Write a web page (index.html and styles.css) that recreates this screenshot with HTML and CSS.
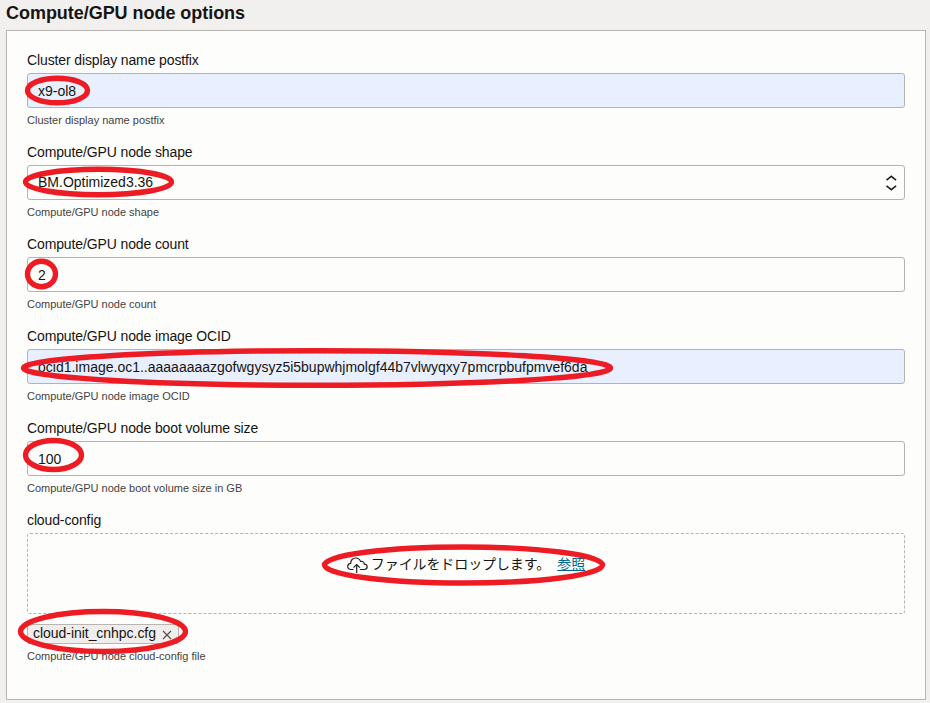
FILE: index.html
```html
<!DOCTYPE html>
<html lang="ja">
<head>
<meta charset="utf-8">
<title>Compute/GPU node options</title>
<link rel="stylesheet" href="styles.css">
</head>
<body>
<h2 class="title">Compute/GPU node options</h2>
<main class="panel">
  <div class="field">
    <div class="label">Cluster display name postfix</div>
    <div class="input filled"><span>x9-ol8</span></div>
    <div class="hint">Cluster display name postfix</div>
  </div>
  <div class="field">
    <div class="label">Compute/GPU node shape</div>
    <div class="input select"><span>BM.Optimized3.36</span>
      <svg class="chevrons" width="12" height="16" viewBox="0 0 12 16"><path d="M1.500 5.200 6.300 1.300l4.800 3.900M1.500 10.800 6.300 14.700l4.800-3.900"/></svg>
    </div>
    <div class="hint">Compute/GPU node shape</div>
  </div>
  <div class="field">
    <div class="label">Compute/GPU node count</div>
    <div class="input"><span>2</span></div>
    <div class="hint">Compute/GPU node count</div>
  </div>
  <div class="field">
    <div class="label">Compute/GPU node image OCID</div>
    <div class="input filled"><span>ocid1.image.oc1..aaaaaaaazgofwgysyz5i5bupwhjmolgf44b7vlwyqxy7pmcrpbufpmvef6da</span></div>
    <div class="hint">Compute/GPU node image OCID</div>
  </div>
  <div class="field">
    <div class="label">Compute/GPU node boot volume size</div>
    <div class="input"><span>100</span></div>
    <div class="hint">Compute/GPU node boot volume size in GB</div>
  </div>
  <div class="upload">
    <div class="label">cloud-config</div>
    <div class="drop">
      <svg class="cloud" width="21" height="17" viewBox="0 0 21 17"><path d="M6.500 12.500H4C2 12.500.7 11.200.7 9.400c0-1.700 1.200-2.900 3-3.100C3.600 3.200 5.700 1 8.600 1c2.300 0 4.200 1.300 5 3.400 2-.4 3.700.8 3.700 2.700 1.700.1 2.900 1.200 2.900 2.700 0 1.500-1.200 2.700-3 2.700h-4.400M9.700 16V7.600M6.500 10.700l3.200-3.200 3.200 3.200"/></svg>
      <span class="drop-text">ファイルをドロップします。</span>
      <a class="browse">参照</a>
    </div>
    <div class="chip"><span>cloud-init_cnhpc.cfg</span>
      <svg width="10" height="10" viewBox="0 0 10 10"><path d="m1 1 8 8M9 1 1 9"/></svg>
    </div>
    <div class="hint">Compute/GPU node cloud-config file</div>
  </div>
</main>
<svg class="marks" width="930" height="703" viewBox="0 0 930 703">
  <ellipse cx="57.500" cy="90.500" rx="30" ry="12.200"/>
  <ellipse cx="98.500" cy="182" rx="73" ry="12.700"/>
  <ellipse cx="41.500" cy="274" rx="14" ry="12.700"/>
  <ellipse cx="317" cy="368" rx="293.500" ry="17.300"/>
  <ellipse cx="53.500" cy="455" rx="28" ry="14.500"/>
  <ellipse cx="463.500" cy="565" rx="139" ry="18"/>
  <ellipse cx="103" cy="631.500" rx="82.500" ry="20"/>
</svg>
</body>
</html>
```
FILE: styles.css
```css
* { box-sizing: border-box; }
body {
  margin: 0;
  height: 703px;
  overflow: hidden;
  background: #f2f0ef;
  color: #161513;
  font-family: "Liberation Sans", "Noto Sans CJK JP", sans-serif;
  font-size: 14px;
}
.title {
  margin: 0;
  height: 30px;
  padding: 3px 6px 0;
  font-size: 18px;
  line-height: 20px;
  font-weight: 700;
  letter-spacing: -0.04px;
}
.panel {
  width: 920px;
  height: 670px;
  margin-left: 6px;
  padding: 20px;
  border: 1px solid #b8b4b0;
  background: #fdfdfb;
}
.field { height: 92px; }
.label { height: 22px; line-height: 18px; white-space: nowrap; letter-spacing: -0.12px; }
.input {
  display: flex;
  align-items: center;
  height: 35px;
  padding: 1px 7px 0 10px;
  border: 1px solid #b5b2af;
  border-radius: 3px;
}
.filled { background: #e8effe; }
.select { justify-content: space-between; padding-top: 0; padding-bottom: 1px; }
.chevrons, .cloud, .chip svg { fill: none; stroke: #222; }
.chevrons { stroke-width: 1.6; margin-top: 1px; }
.hint {
  height: 14px;
  margin-top: 5px;
  font-size: 11px;
  line-height: 14px;
  color: #45423f;
  white-space: nowrap;
}
.drop {
  display: flex;
  justify-content: center;
  height: 81px;
  padding: 20px 0 0;
  border: 1px dashed #b5b2af;
  border-radius: 3px;
  line-height: 20px;
}
.cloud { margin: 3px 3px 0 0; stroke-width: 1.2; }
.drop-text { white-space: nowrap; letter-spacing: -0.1px; }
.browse { margin-left: 7px; color: #00688c; text-decoration: underline; }
.chip {
  display: flex;
  align-items: center;
  width: 152px;
  height: 20px;
  margin-top: 10px;
  padding: 0 0 2px 5px;
  border: 1px solid #b8b4b0;
  border-radius: 2px;
  background: #f0eeec;
  white-space: nowrap;
  letter-spacing: -0.04px;
}
.chip svg { margin: 4px 0 0 6px; stroke: #55514e; stroke-width: 1.2; }
.marks {
  position: absolute;
  top: 0;
  left: 0;
  fill: none;
  stroke: #ed1c24;
  stroke-width: 5.4;
  pointer-events: none;
}
```
